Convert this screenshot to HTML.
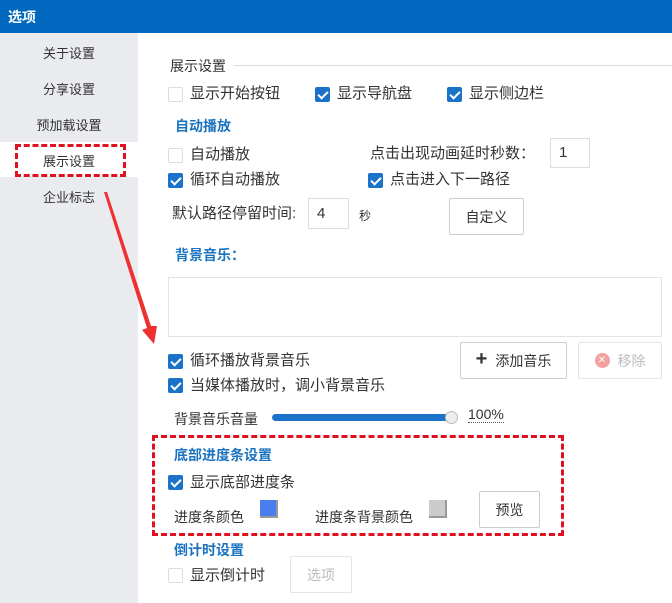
<!DOCTYPE html><html><head><meta charset="utf-8"><style>
*{margin:0;padding:0;box-sizing:border-box}
body{width:672px;height:603px;overflow:hidden;background:#fff;font-family:"Liberation Sans","Noto Sans CJK SC",sans-serif;color:#333;position:relative}
.a{position:absolute;white-space:nowrap}
.t{font-size:15px;line-height:18px}
.s{font-size:14px}
.b{color:#1a73c0;font-weight:bold;font-size:14px}
.cb{position:absolute;width:15px;height:15px;border:1px solid #ddd;border-radius:2px;background:#fff}
.cb.on{background:#1a73c8;border-color:#1a73c8}
.cb.on:after{content:"";position:absolute;left:4px;top:1px;width:4px;height:8px;border:solid #fff;border-width:0 2px 2px 0;transform:rotate(45deg)}
.btn{position:absolute;border:1px solid #ccc;border-radius:2px;background:#fff;font-size:14px;display:flex;align-items:center;justify-content:center}
.inp{position:absolute;border:1px solid #ddd;background:#fff;font-size:15px;padding-left:8px}
.side{position:absolute;left:0;top:33px;width:138px;height:570px;background:#e9ebef}
.si{position:absolute;left:0;width:138px;text-align:center;font-size:13px}
</style></head><body>
<div class="a" style="left:0;top:0;width:672px;height:33px;background:#0068bf"></div>
<div class="a" style="left:8px;top:7px;color:#fff;font-weight:bold;font-size:14px">选项</div>
<div class="side"></div>
<div class="si a" style="top:43px">关于设置</div>
<div class="si a" style="top:79px">分享设置</div>
<div class="si a" style="top:115px">预加载设置</div>
<div class="a" style="left:0;top:142px;width:138px;height:35px;background:#fff"></div>
<div class="si a" style="top:151px">展示设置</div>
<div class="a" style="left:15px;top:144px;width:111px;height:33px;border:3px dashed #e01020"></div>
<div class="si a" style="top:187px">企业标志</div>
<svg class="a" style="left:0;top:0" width="672" height="603"><polygon points="104,192 107,192 151,326 157,326 154,344 142,330 147,328" fill="#f03030"/></svg>
<div class="a" style="left:170px;top:56px;font-size:14px">展示设置</div>
<div class="a" style="left:234px;top:65px;width:438px;height:1px;background:#ddd"></div>
<div class="cb" style="left:168px;top:87px"></div><div class="a t" style="left:190px;top:85px">显示开始按钮</div>
<div class="cb on" style="left:315px;top:87px"></div><div class="a t" style="left:337px;top:85px">显示导航盘</div>
<div class="cb on" style="left:447px;top:87px"></div><div class="a t" style="left:469px;top:85px">显示侧边栏</div>
<div class="a b" style="left:175px;top:116px">自动播放</div>
<div class="cb" style="left:168px;top:148px"></div><div class="a t" style="left:190px;top:146px">自动播放</div>
<div class="a t" style="left:370px;top:145px">点击出现动画延时秒数：</div>
<div class="inp" style="left:550px;top:138px;width:40px;height:30px;line-height:28px">1</div>
<div class="cb on" style="left:168px;top:173px"></div><div class="a t" style="left:190px;top:171px">循环自动播放</div>
<div class="cb on" style="left:368px;top:173px"></div><div class="a t" style="left:390px;top:171px">点击进入下一路径</div>
<div class="a t" style="left:172px;top:205px">默认路径停留时间:</div>
<div class="inp" style="left:308px;top:198px;width:41px;height:31px;line-height:29px">4</div>
<div class="a" style="left:359px;top:207px;font-size:12px">秒</div>
<div class="btn" style="left:449px;top:198px;width:75px;height:37px">自定义</div>
<div class="a b" style="left:175px;top:245px">背景音乐：</div>
<div class="a" style="left:168px;top:277px;width:494px;height:60px;border:1px solid #e3e3e3"></div>
<div class="cb on" style="left:168px;top:354px"></div><div class="a t" style="left:190px;top:352px">循环播放背景音乐</div>
<div class="cb on" style="left:168px;top:378px"></div><div class="a t" style="left:190px;top:377px">当媒体播放时，调小背景音乐</div>
<div class="btn" style="left:460px;top:342px;width:107px;height:37px"><b style="font-size:20px;margin-right:8px;margin-top:-2px">+</b>添加音乐</div>
<div class="btn" style="left:578px;top:342px;width:84px;height:37px;border-color:#e5e5e5;color:#bbb"><span style="display:inline-block;width:15px;height:15px;border-radius:50%;background:#f2a0a0;color:#fff;font-size:10px;line-height:15px;text-align:center;margin-right:8px">✕</span>移除</div>
<div class="a s" style="left:174px;top:409px">背景音乐音量</div>
<div class="a" style="left:272px;top:414px;width:185px;height:7px;border-radius:4px;background:#1a73c8"></div>
<div class="a" style="left:445px;top:411px;width:13px;height:13px;border-radius:50%;background:#eee;border:1px solid #bbb"></div>
<div class="a s" style="left:468px;top:407px;border-bottom:1px dotted #555;line-height:15px">100%</div>
<div class="a" style="left:152px;top:435px;width:412px;height:101px;border:3px dashed #e01020"></div>
<div class="a b" style="left:174px;top:445px">底部进度条设置</div>
<div class="cb on" style="left:168px;top:475px"></div><div class="a t" style="left:190px;top:474px">显示底部进度条</div>
<div class="a s" style="left:174px;top:507px">进度条颜色</div>
<div class="a" style="left:260px;top:500px;width:18px;height:18px;background:#4a7ef0;border-right:2px solid #999;border-bottom:2px solid #999"></div>
<div class="a s" style="left:315px;top:507px">进度条背景颜色</div>
<div class="a" style="left:429px;top:500px;width:18px;height:18px;background:#ccc;border-right:2px solid #999;border-bottom:2px solid #999"></div>
<div class="btn" style="left:479px;top:491px;width:61px;height:37px">预览</div>
<div class="a b" style="left:174px;top:540px">倒计时设置</div>
<div class="cb" style="left:168px;top:568px"></div><div class="a t" style="left:190px;top:567px">显示倒计时</div>
<div class="btn" style="left:290px;top:556px;width:62px;height:37px;border-color:#e5e5e5;color:#bbb">选项</div>
</body></html>
